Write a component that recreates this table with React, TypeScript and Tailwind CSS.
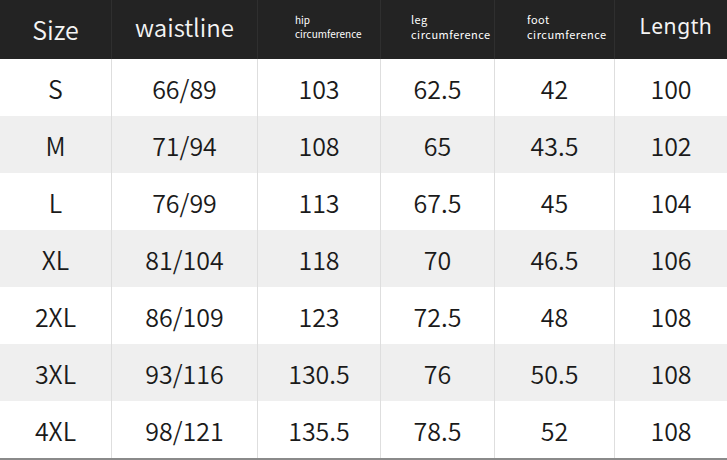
import React from "react";

const cols = ["w-[112px]", "w-[146px]", "w-[123px]", "w-[114px]", "w-[120px]", "w-[112px]"];

const rows = [
  ["S", "66/89", "103", "62.5", "42", "100"],
  ["M", "71/94", "108", "65", "43.5", "102"],
  ["L", "76/99", "113", "67.5", "45", "104"],
  ["XL", "81/104", "118", "70", "46.5", "106"],
  ["2XL", "86/109", "123", "72.5", "48", "108"],
  ["3XL", "93/116", "130.5", "76", "50.5", "108"],
  ["4XL", "98/121", "135.5", "78.5", "52", "108"],
];

function Small({ a, cls }: { a: string; cls: string }) {
  return (
    <div className={`flex flex-col justify-center h-full text-white ${cls}`}>
      <span className="block">{a}</span>
      <span className="block">circumference</span>
    </div>
  );
}

export default function App() {
  return (
    <div
      className="w-[727px] h-[460px] bg-white text-[#1a1a1a]"
      style={{ fontFamily: '"Noto Sans CJK SC", "Noto Sans", sans-serif' }}
    >
      <div className="flex h-[59px] bg-[#232323] text-[#f4f4f4]">
        <div className={`${cols[0]} flex items-center justify-center text-[25px] font-[350] border-r border-[#2f2f2f]`}>Size</div>
        <div className={`${cols[1]} flex items-center justify-center text-[24px] font-[350] pb-[6px] border-r border-[#2f2f2f]`}>waistline</div>
        <div className={`${cols[2]} border-r border-[#2f2f2f]`}>
          <Small a="hip" cls="pl-[37px] pb-[6px] text-[10px] leading-[14px]" />
        </div>
        <div className={`${cols[3]} border-r border-[#2f2f2f]`}>
          <Small a="leg" cls="pl-[30px] pb-[6px] text-[11px] leading-[15px] tracking-[0.5px]" />
        </div>
        <div className={`${cols[4]} border-r border-[#2f2f2f]`}>
          <Small a="foot" cls="pl-[32px] pb-[6px] text-[11px] leading-[15px] tracking-[0.5px]" />
        </div>
        <div
          className={`${cols[5]} flex items-center justify-center text-[21px] pb-[6px] pl-[10px] tracking-[0.6px]`}
          style={{ fontFamily: '"Noto Sans", sans-serif' }}
        >
          Length
        </div>
      </div>
      {rows.map((r, i) => (
        <div key={i} className={`flex h-[57px] ${i % 2 === 1 ? "bg-[#efefef]" : "bg-white"}`}>
          {r.map((c, j) => (
            <div
              key={j}
              className={`${cols[j]} flex items-center justify-center pt-[3px] text-[25px] font-[350] ${j < 5 ? "border-r border-[#dedede]" : ""}`}
            >
              {c}
            </div>
          ))}
        </div>
      ))}
      <div className="h-[2px] bg-[#8a8a8a]" />
    </div>
  );
}
